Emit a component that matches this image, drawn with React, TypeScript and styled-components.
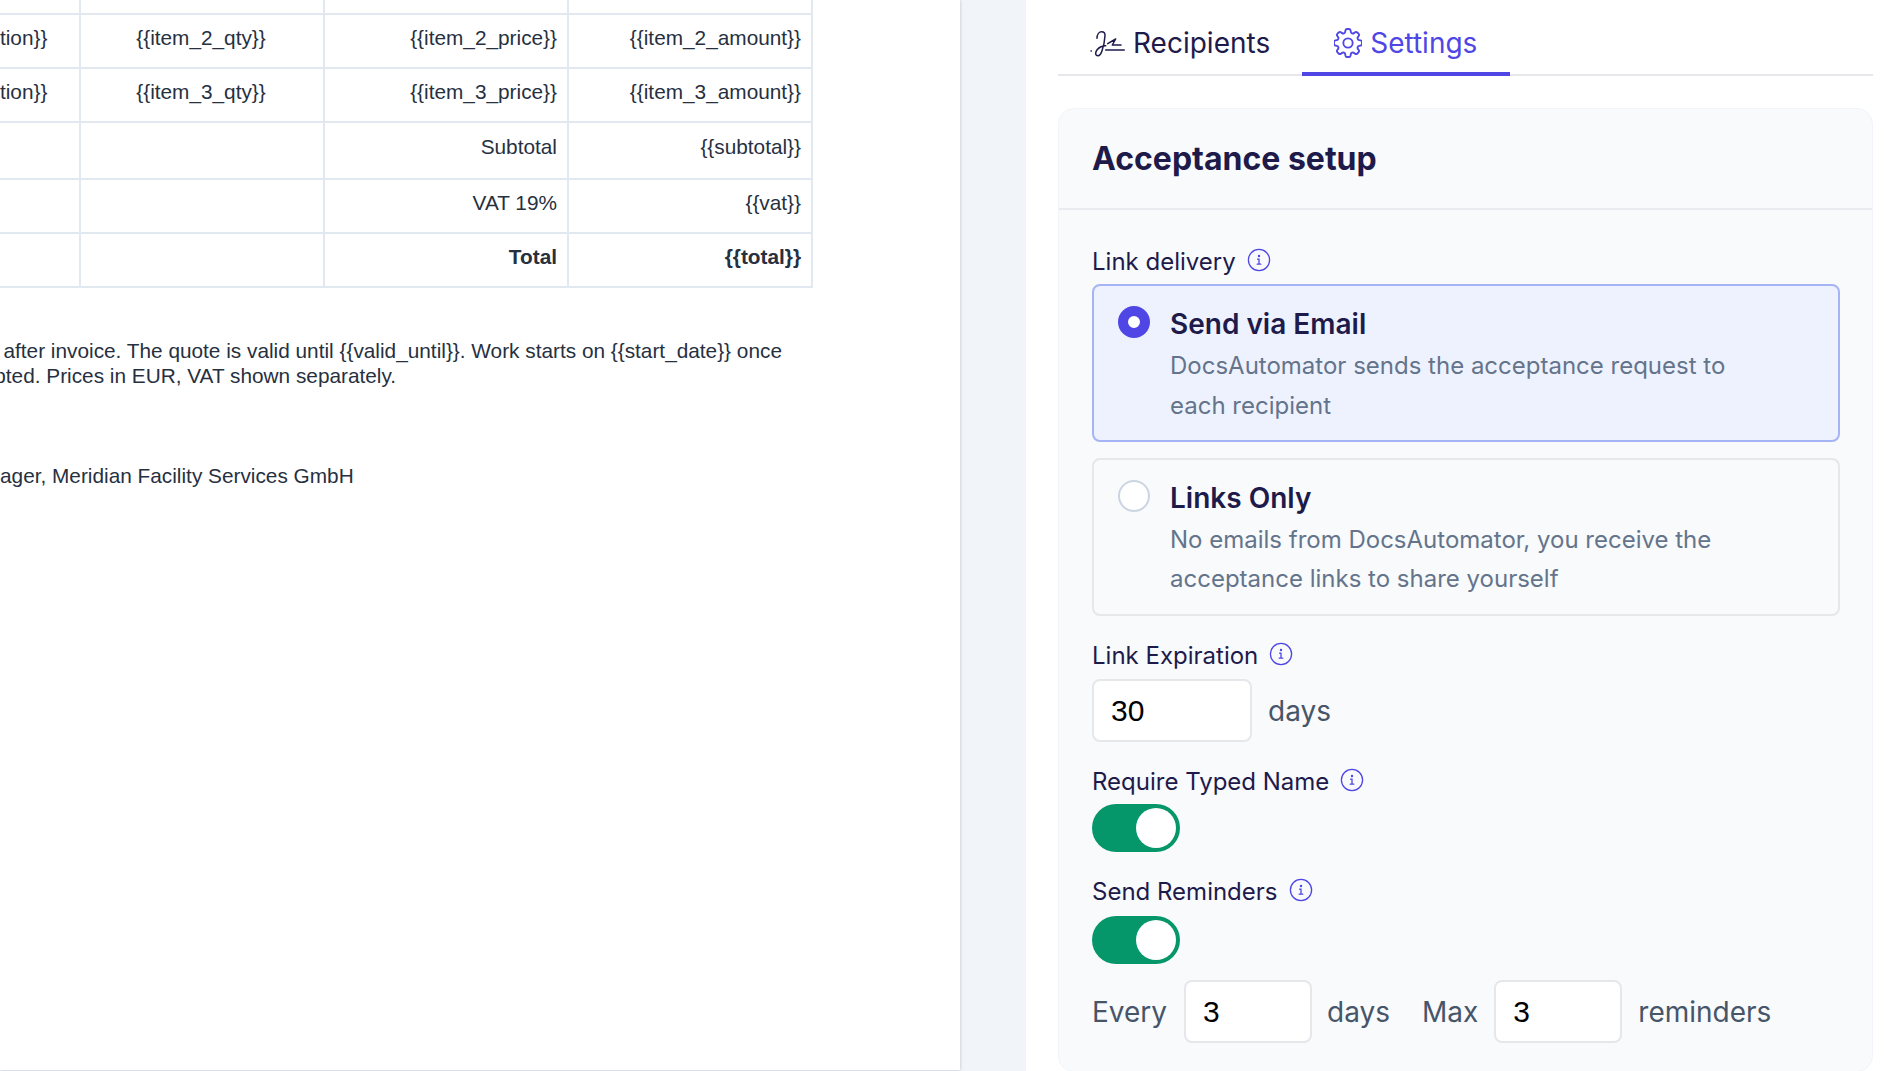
import React from 'react';
import styled, { createGlobalStyle } from 'styled-components';

const Global = createGlobalStyle`
  html, body { margin: 0; padding: 0; height: 100%; overflow: hidden; background: #fff; }
  * { box-sizing: border-box; }
`;

const Page = styled.div`
  display: flex;
  width: 1904px;
  height: 1071px;
  overflow: hidden;
  font-family: Inter, "Noto Sans", sans-serif;
  color: #1e1b4b;
`;

const DocPane = styled.div`
  width: 1026px;
  flex: none;
  background: #f1f5f9;
  padding-bottom: 1px;
  display: flex;
`;

const Paper = styled.div`
  width: 960px;
  height: 100%;
  background: #fff;
  overflow: hidden;
  box-shadow: 0 0 3px rgba(71, 85, 105, 0.35);
  font-family: "Liberation Sans", Arial, sans-serif;
  font-size: 20.8px;
  color: #27303f;
`;

const Sheet = styled.div`
  width: 976px;
  margin-left: -163px;
`;

const Table = styled.div`
  display: grid;
  grid-template-columns: repeat(4, 244px);
  width: 976px;
  margin-bottom: 50px;
`;

const Cell = styled.div<{ $h: number; $align?: string; $bold?: boolean }>`
  height: ${p => p.$h}px;
  border-right: 2px solid #e2e8f0;
  border-bottom: 2px solid #e2e8f0;
  padding: 0 10px 7px 8px;
  display: flex;
  align-items: center;
  justify-content: ${p => p.$align ?? 'flex-start'};
  font-weight: ${p => (p.$bold ? 700 : 400)};
  white-space: nowrap;
`;

const Para = styled.p`
  margin: 0;
  line-height: 25px;
  white-space: nowrap;
`;

const Signature = styled(Para)`
  margin-top: 75px;
`;

const Side = styled.div`
  flex: 1;
  padding: 0 31px 0 32px;
  background: #fff;
  min-width: 0;
`;

const Tabs = styled.div`
  display: flex;
  height: 76px;
  border-bottom: 2px solid #e5e7eb;
  margin-bottom: 32px;
`;

const Tab = styled.div<{ $active?: boolean }>`
  display: flex;
  align-items: center;
  gap: 8px;
  height: 76px;
  padding: 18px ${p => (p.$active ? 33 : 32)}px 4px 32px;
  font-size: 28px;
  color: ${p => (p.$active ? '#4f46e5' : '#1e1b4b')};
  border-bottom: 4px solid ${p => (p.$active ? '#4f46e5' : 'transparent')};
`;

const Card = styled.section`
  height: 964px;
  background: #f8fafc;
  border: 1px solid #f1f5f9;
  border-radius: 16px;
`;

const CardHead = styled.header`
  height: 101px;
  display: flex;
  align-items: center;
  padding: 0 33px;
  border-bottom: 2px solid #e8ecf1;
`;

const Title = styled.h2`
  margin: 0;
  font-size: 32px;
  font-weight: 700;
  color: #1e1b4b;
`;

const CardBody = styled.div`
  padding: 35px 32px 0 33px;
  display: flex;
  flex-direction: column;
`;

const Label = styled.div<{ $mt?: number }>`
  display: flex;
  align-items: center;
  gap: 11px;
  height: 32px;
  margin-top: ${p => p.$mt ?? 0}px;
  font-size: 24px;
  color: #1e1b4b;
`;

const Option = styled.div<{ $on?: boolean; $mt?: number }>`
  height: 158px;
  margin-top: ${p => p.$mt ?? 0}px;
  border: 2px solid ${p => (p.$on ? '#a5b4f4' : '#e5e7eb')};
  background: ${p => (p.$on ? '#eef2ff' : '#f8fafc')};
  border-radius: 8px;
  display: flex;
  gap: 20px;
  padding: 20px 24px;
`;

const Radio = styled.div<{ $on?: boolean }>`
  width: 32px;
  height: 32px;
  border-radius: 50%;
  flex: none;
  background: #fff;
  border: ${p => (p.$on ? '10px solid #4f46e5' : '2px solid #cbd5e1')};
`;

const OptionText = styled.div`
  display: flex;
  flex-direction: column;
`;

const OptionTitle = styled.div`
  font-size: 28px;
  font-weight: 600;
  line-height: 36px;
  color: #1e1b4b;
`;

const OptionDesc = styled.div<{ $lh: number }>`
  margin-top: 4px;
  font-size: 24px;
  line-height: ${p => p.$lh}px;
  color: #64748b;
`;

const Row = styled.div<{ $mt?: number }>`
  display: flex;
  align-items: center;
  margin-top: ${p => p.$mt ?? 0}px;
`;

const NumInput = styled.div<{ $w: number; $ml?: number }>`
  width: ${p => p.$w}px;
  height: 63px;
  margin-left: ${p => p.$ml ?? 0}px;
  flex: none;
  background: #fff;
  border: 2px solid #e5e7eb;
  border-radius: 8px;
  padding-left: 17px;
  display: flex;
  align-items: center;
  font-family: "Liberation Sans", Arial, sans-serif;
  font-size: 30px;
  color: #000;
`;

const Unit = styled.span<{ $ml?: number }>`
  margin-left: ${p => p.$ml ?? 0}px;
  font-size: 28px;
  color: #475569;
`;

const Toggle = styled.div<{ $mt: number }>`
  width: 88px;
  height: 48px;
  margin-top: ${p => p.$mt}px;
  border-radius: 24px;
  background: #059669;
  padding: 4px;
  display: flex;
  justify-content: flex-end;
`;

const Knob = styled.div`
  width: 40px;
  height: 40px;
  border-radius: 50%;
  background: #fff;
`;

const InfoSvg = styled.svg`
  width: 24px;
  height: 24px;
  margin-top: -2px;
  flex: none;
  color: #4f46e5;
`;

const Info = () => (
  <InfoSvg viewBox="0 0 24 24" fill="none" stroke="currentColor" strokeWidth="1.3" strokeLinecap="round">
    <circle cx="12" cy="12" r="10.6" />
    <path d="M10.6 11.2H12v5M10.200 16.200h3.600" />
    <circle cx="12" cy="8" r=".55" fill="currentColor" />
  </InfoSvg>
);

const SignIcon = () => (
  <svg width="35" height="30" viewBox="0 0 35 30" fill="none" stroke="#1e1b4b" strokeWidth="1.5" strokeLinecap="round" strokeLinejoin="round">
    <path d="M1 23h.3" />
    <path d="M7 10.300C7 6.500 9 3.700 11.700 3.700c2.300 0 3.500 1.500 3.300 4-.3 5.500-1.500 11-3.300 16-1 2.700-2.300 4-3.600 4-1.700 0-2.700-1-2.400-2.700.4-2.500 2.800-5 5.300-6.200 1.700-.8 3.300-1.300 4.700-1.100" />
    <path d="M17.700 15.700l8-4.700-3.400 6H31" />
    <path d="M15.700 22h18.600" />
  </svg>
);

const GearIcon = () => (
  <svg width="28" height="30" viewBox="3 2.500 18 19" fill="none" stroke="#4f46e5" strokeWidth="1.2" strokeLinecap="round" strokeLinejoin="round">
    <path d="M10.343 3.94c.09-.542.56-.94 1.11-.94h1.093c.55 0 1.02.398 1.11.94l.149.894c.07.424.384.764.78.93.398.164.855.142 1.205-.108l.737-.527a1.125 1.125 0 0 1 1.45.12l.773.774c.39.389.44 1.002.12 1.45l-.527.737c-.25.35-.272.806-.107 1.204.165.397.505.71.93.78l.893.15c.543.09.94.559.94 1.109v1.094c0 .55-.397 1.02-.94 1.11l-.894.149c-.424.07-.764.383-.929.78-.165.398-.143.854.107 1.204l.527.738c.32.447.269 1.06-.12 1.45l-.774.773a1.125 1.125 0 0 1-1.449.12l-.738-.527c-.35-.25-.806-.272-1.203-.107-.398.165-.71.505-.781.929l-.149.894c-.09.542-.56.94-1.11.94h-1.094c-.55 0-1.019-.398-1.11-.94l-.148-.894c-.071-.424-.384-.764-.781-.93-.398-.164-.854-.142-1.204.108l-.738.527c-.447.32-1.06.269-1.45-.12l-.773-.774a1.125 1.125 0 0 1-.12-1.45l.527-.737c.25-.35.272-.806.108-1.204-.165-.397-.506-.71-.93-.78l-.894-.15c-.542-.09-.94-.56-.94-1.109v-1.094c0-.55.398-1.02.94-1.11l.894-.149c.424-.07.765-.383.93-.78.165-.398.143-.854-.108-1.204l-.526-.738a1.125 1.125 0 0 1 .12-1.45l.773-.773a1.125 1.125 0 0 1 1.45-.12l.737.527c.35.25.807.272 1.204.107.397-.165.71-.505.78-.929l.15-.894Z" />
    <path d="M15 12a3 3 0 1 1-6 0 3 3 0 0 1 6 0Z" />
  </svg>
);

const rows = [
  { h: 15, c: ['', '', '', ''] },
  { h: 54, c: ['{{item_2_description}}', '{{item_2_qty}}', '{{item_2_price}}', '{{item_2_amount}}'] },
  { h: 54, c: ['{{item_3_description}}', '{{item_3_qty}}', '{{item_3_price}}', '{{item_3_amount}}'] },
  { h: 57, c: ['', '', 'Subtotal', '{{subtotal}}'] },
  { h: 54, c: ['', '', 'VAT 19%', '{{vat}}'] },
  { h: 54, c: ['', '', 'Total', '{{total}}'], bold: true },
];

const aligns = ['flex-start', 'center', 'flex-end', 'flex-end'];

export default function App() {
  return (
    <Page>
      <Global />
      <DocPane>
        <Paper>
          <Sheet>
            <Table>
              {rows.flatMap((r, i) =>
                r.c.map((t, j) => (
                  <Cell key={`${i}-${j}`} $h={r.h} $align={aligns[j]} $bold={r.bold}>
                    {t}
                  </Cell>
                )),
              )}
            </Table>
            <Para>
              Payment 14 days after invoice. The quote is valid until {'{{valid_until}}'}. Work starts on {'{{start_date}}'} once
              <br />
              the quote is accepted. Prices in EUR, VAT shown separately.
            </Para>
            <Signature>Lead Project Manager, Meridian Facility Services GmbH</Signature>
          </Sheet>
        </Paper>
      </DocPane>
      <Side>
        <Tabs>
          <Tab>
            <SignIcon />
            Recipients
          </Tab>
          <Tab $active>
            <GearIcon />
            Settings
          </Tab>
        </Tabs>
        <Card>
          <CardHead>
            <Title>Acceptance setup</Title>
          </CardHead>
          <CardBody>
            <Label>
              Link delivery <Info />
            </Label>
            <Option $on $mt={7}>
              <Radio $on />
              <OptionText>
                <OptionTitle>Send via Email</OptionTitle>
                <OptionDesc $lh={40}>
                  DocsAutomator sends the acceptance request to
                  <br />
                  each recipient
                </OptionDesc>
              </OptionText>
            </Option>
            <Option $mt={16}>
              <Radio />
              <OptionText>
                <OptionTitle>Links Only</OptionTitle>
                <OptionDesc $lh={39}>
                  No emails from DocsAutomator, you receive the
                  <br />
                  acceptance links to share yourself
                </OptionDesc>
              </OptionText>
            </Option>
            <Label $mt={23}>
              Link Expiration <Info />
            </Label>
            <Row $mt={8}>
              <NumInput $w={160}>30</NumInput>
              <Unit $ml={16}>days</Unit>
            </Row>
            <Label $mt={23}>
              Require Typed Name <Info />
            </Label>
            <Toggle $mt={7}>
              <Knob />
            </Toggle>
            <Label $mt={23}>
              Send Reminders <Info />
            </Label>
            <Toggle $mt={9}>
              <Knob />
            </Toggle>
            <Row $mt={16}>
              <Unit>Every</Unit>
              <NumInput $w={128} $ml={17}>3</NumInput>
              <Unit $ml={15}>days</Unit>
              <Unit $ml={32}>Max</Unit>
              <NumInput $w={128} $ml={16}>3</NumInput>
              <Unit $ml={16}>reminders</Unit>
            </Row>
          </CardBody>
        </Card>
      </Side>
    </Page>
  );
}
